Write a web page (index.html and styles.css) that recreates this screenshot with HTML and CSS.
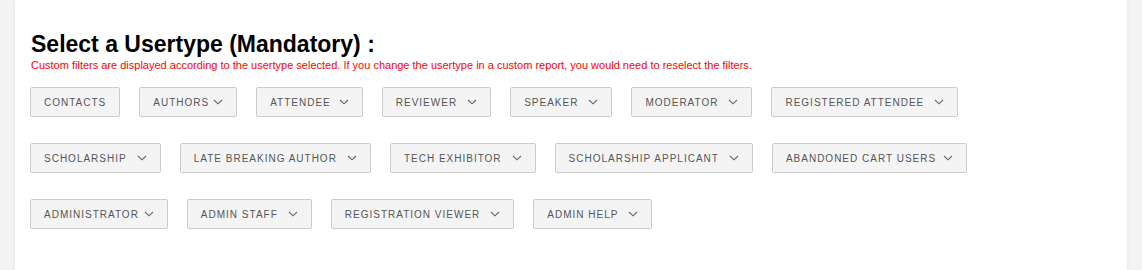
FILE: index.html
```html
<!DOCTYPE html>
<html lang="en">
<head>
  <meta charset="UTF-8" />
  <meta name="viewport" content="width=device-width, initial-scale=1.0"/>
  <title>Custom Report - Usertype</title>
  <link rel="stylesheet" href="styles.css">
</head>
<body>
  <div class="panel">
    <h2 class="section-title">Select a Usertype (Mandatory) :</h2>
    <p class="hint">Custom filters are displayed according to the usertype selected. If you change the usertype in a custom report, you would need to reselect the filters.</p>

    <div class="usertypes">
      <div class="usertype-row">
        <button class="usertype">Contacts</button>
        <button class="usertype">Authors<svg class="caret caret-tight" viewBox="0 0 10 6"><path d="M1 1 L5 4.8 L9 1"/></svg></button>
        <button class="usertype">Attendee<svg class="caret caret-short" viewBox="0 0 10 6"><path d="M1 1 L5 4.8 L9 1"/></svg></button>
        <button class="usertype">Reviewer<svg class="caret" viewBox="0 0 10 6"><path d="M1 1 L5 4.8 L9 1"/></svg></button>
        <button class="usertype">Speaker<svg class="caret" viewBox="0 0 10 6"><path d="M1 1 L5 4.8 L9 1"/></svg></button>
        <button class="usertype">Moderator<svg class="caret" viewBox="0 0 10 6"><path d="M1 1 L5 4.8 L9 1"/></svg></button>
        <button class="usertype">Registered Attendee<svg class="caret" viewBox="0 0 10 6"><path d="M1 1 L5 4.8 L9 1"/></svg></button>
      </div>
      <div class="usertype-row">
        <button class="usertype">Scholarship<svg class="caret" viewBox="0 0 10 6"><path d="M1 1 L5 4.8 L9 1"/></svg></button>
        <button class="usertype">Late Breaking Author<svg class="caret" viewBox="0 0 10 6"><path d="M1 1 L5 4.8 L9 1"/></svg></button>
        <button class="usertype">Tech Exhibitor<svg class="caret" viewBox="0 0 10 6"><path d="M1 1 L5 4.8 L9 1"/></svg></button>
        <button class="usertype">Scholarship Applicant<svg class="caret" viewBox="0 0 10 6"><path d="M1 1 L5 4.8 L9 1"/></svg></button>
        <button class="usertype">Abandoned Cart Users<svg class="caret caret-mid" viewBox="0 0 10 6"><path d="M1 1 L5 4.8 L9 1"/></svg></button>
      </div>
      <div class="usertype-row">
        <button class="usertype">Administrator<svg class="caret caret-near" viewBox="0 0 10 6"><path d="M1 1 L5 4.8 L9 1"/></svg></button>
        <button class="usertype">Admin Staff<svg class="caret" viewBox="0 0 10 6"><path d="M1 1 L5 4.8 L9 1"/></svg></button>
        <button class="usertype">Registration Viewer<svg class="caret" viewBox="0 0 10 6"><path d="M1 1 L5 4.8 L9 1"/></svg></button>
        <button class="usertype">Admin Help<svg class="caret" viewBox="0 0 10 6"><path d="M1 1 L5 4.8 L9 1"/></svg></button>
      </div>
    </div>
  </div>
</body>
</html>
```

FILE: styles.css
```css
body {
  font-family: 'Liberation Sans', Arial, sans-serif;
  background: #f4f4f4;
  margin: 0;
}

.panel {
  margin: 0 15px;
  min-height: 270px;
  box-sizing: border-box;
  background: #fff;
  padding: 30px 15px 0;
  box-shadow: 0 0 4px rgba(0,0,0,0.08);
}

.section-title {
  font-size: 23px;
  font-weight: bold;
  line-height: 28px;
  margin: 0 0 0 1px;
  color: #000;
}

.hint {
  color: #f00;
  font-size: 11px;
  line-height: 14px;
  margin: 0 0 0 1px;
}

.usertypes {
  margin-top: 15px;
}

.usertype-row {
  display: flex;
  gap: 19px;
  margin-bottom: 26px;
}

.usertype {
  display: inline-flex;
  align-items: center;
  height: 30px;
  padding: 0 13px;
  background: #f4f4f4;
  border: 1px solid #ccc;
  border-radius: 2px;
  color: #555;
  font-family: 'Liberation Sans', Arial, sans-serif;
  font-size: 10px;
  letter-spacing: 1px;
  text-transform: uppercase;
  cursor: pointer;
}

.caret {
  width: 10px;
  height: 6px;
  margin-left: 10px;
  fill: none;
  stroke: #666;
  stroke-width: 1.1;
}

.caret-tight {
  margin-left: 4px;
}

.caret-short {
  margin-left: 8px;
}

.caret-near {
  margin-left: 5px;
}

.caret-mid {
  margin-left: 7px;
}
```
